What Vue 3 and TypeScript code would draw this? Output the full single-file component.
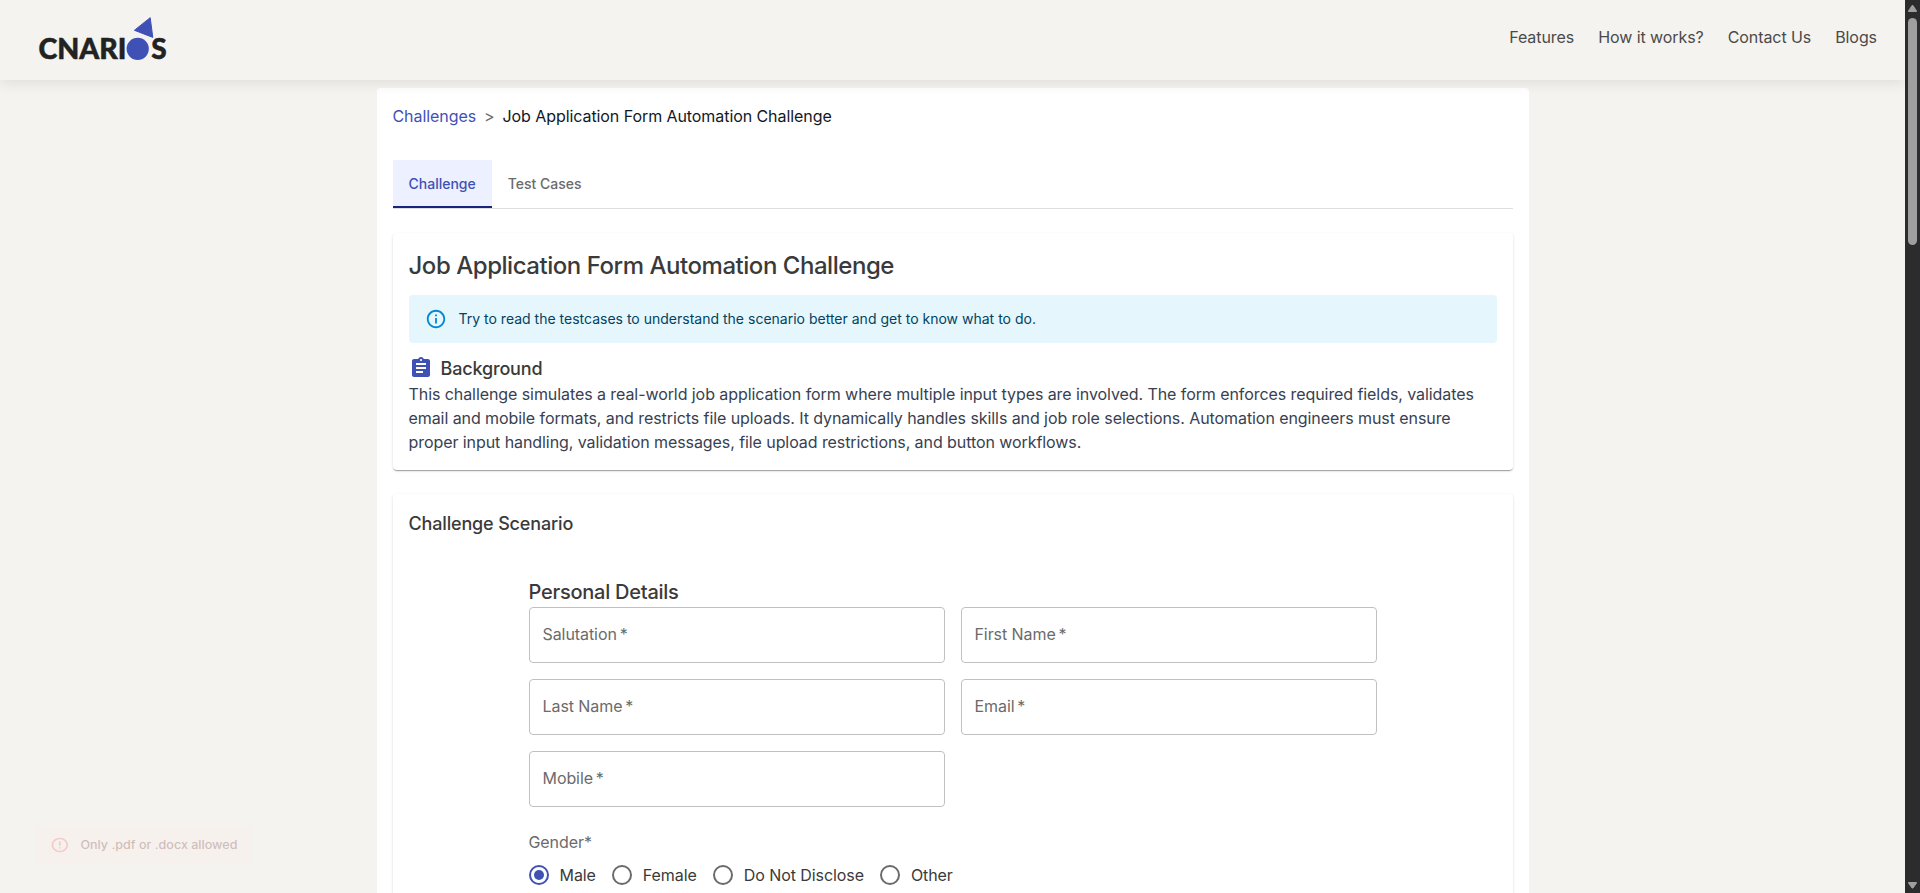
<script setup lang="ts">
import { ref } from 'vue'

interface Field { id: string; label: string }

const navLinks: string[] = ['Features', 'How it works?', 'Contact Us', 'Blogs']
const tabs: string[] = ['Challenge', 'Test Cases']
const activeTab = ref<string>('Challenge')
const fields: Field[] = [
  { id: 'salutation', label: 'Salutation' },
  { id: 'first', label: 'First Name' },
  { id: 'last', label: 'Last Name' },
  { id: 'email', label: 'Email' },
  { id: 'mobile', label: 'Mobile' },
]
const genders: string[] = ['Male', 'Female', 'Do Not Disclose', 'Other']
const gender = ref<string>('Male')
</script>

<template>
  <div class="window">
    <div class="page">
      <header class="header">
        <svg class="logo" width="140" height="56" viewBox="0 0 140 56" role="img" aria-label="CNARIOS">
          <text x="6.5" y="47.3" class="logo-text" textLength="88" lengthAdjust="spacingAndGlyphs">CNARI</text>
          <circle cx="105.7" cy="36.8" r="11.1" fill="#3f51b5" />
          <path d="M118.2 5.7 102.4 18.3 120.8 25.4Z" fill="#3f51b5" stroke="#3f51b5" stroke-linejoin="round" />
          <text x="119.3" y="47.3" class="logo-text" textLength="15.4" lengthAdjust="spacingAndGlyphs">S</text>
        </svg>
        <nav class="nav">
          <a v-for="link in navLinks" :key="link">{{ link }}</a>
        </nav>
      </header>

      <main class="container">
        <div class="crumbs">
          <a class="crumb-link">Challenges</a>
          <span class="crumb-sep">&gt;</span>
          <span>Job Application Form Automation Challenge</span>
        </div>

        <div class="tabs">
          <button v-for="tab in tabs" :key="tab" class="tab" :class="{ active: tab === activeTab }" @click="activeTab = tab">
            {{ tab }}
          </button>
        </div>

        <section class="card intro">
          <h1>Job Application Form Automation Challenge</h1>
          <div class="alert">
            <svg width="22" height="22" viewBox="0 0 24 24" fill="#0288d1">
              <path d="M11 7h2v2h-2zm0 4h2v6h-2zm1-9C6.48 2 2 6.48 2 12s4.48 10 10 10 10-4.48 10-10S17.52 2 12 2m0 18c-4.41 0-8-3.59-8-8s3.59-8 8-8 8 3.59 8 8-3.59 8-8 8" />
            </svg>
            <span>Try to read the testcases to understand the scenario better and get to know what to do.</span>
          </div>
          <div class="background-head">
            <svg width="24" height="24" viewBox="0 0 24 24" fill="#3f51b5">
              <path d="M19 3h-4.18C14.4 1.84 13.3 1 12 1s-2.4.84-2.82 2H5c-1.1 0-2 .9-2 2v14c0 1.1.9 2 2 2h14c1.1 0 2-.9 2-2V5c0-1.1-.9-2-2-2m-7 0c.55 0 1 .45 1 1s-.45 1-1 1-1-.45-1-1 .45-1 1-1m2 14H7v-2h7zm3-4H7v-2h10zm0-4H7V7h10z" />
            </svg>
            <h2>Background</h2>
          </div>
          <p>
            This challenge simulates a real-world job application form where multiple input types are involved. The form
            enforces required fields, validates email and mobile formats, and restricts file uploads. It dynamically
            handles skills and job role selections. Automation engineers must ensure proper input handling, validation
            messages, file upload restrictions, and button workflows.
          </p>
        </section>

        <section class="card scenario">
          <h2>Challenge Scenario</h2>
          <form class="form" @submit.prevent>
            <h3>Personal Details</h3>
            <div class="grid">
              <div v-for="field in fields" :key="field.id" class="field">
                <span>{{ field.label }}<span class="star">&#8201;*</span></span>
              </div>
            </div>
            <div class="gender-label">Gender*</div>
            <div class="radios">
              <label v-for="option in genders" :key="option" class="radio" @click="gender = option">
                <span class="dot" :class="{ checked: option === gender }"></span>
                {{ option }}
              </label>
            </div>
          </form>
        </section>
      </main>

      <div class="toast">
        <svg width="22" height="22" viewBox="0 0 24 24" fill="#ef5350">
          <path d="M11 15h2v2h-2zm0-8h2v6h-2zm.99-5C6.47 2 2 6.48 2 12s4.47 10 9.99 10C17.52 22 22 17.52 22 12S17.52 2 11.99 2M12 20c-4.42 0-8-3.58-8-8s3.58-8 8-8 8 3.58 8 8-3.58 8-8 8" />
        </svg>
        <span>Only .pdf or .docx allowed</span>
      </div>
    </div>

    <div class="scrollbar">
      <svg width="15" height="18" viewBox="0 0 15 18"><path d="M7 5.5h1L11.5 11v.5h-8V11Z" fill="#9f9f9f" stroke="#9f9f9f" stroke-linejoin="round" /></svg>
      <div class="thumb"></div>
      <svg class="down" width="15" height="18" viewBox="0 0 15 18"><path d="M3.5 7.5h8V8L8 13H7L3.5 8Z" fill="#9f9f9f" stroke="#9f9f9f" stroke-linejoin="round" /></svg>
    </div>
  </div>
</template>

<style>
body {
  margin: 0;
  overflow: hidden;
}
</style>

<style scoped>
* {
  box-sizing: border-box;
}
.window {
  display: flex;
  width: 1920px;
  height: 893px;
  overflow: hidden;
  font-family: Inter, sans-serif;
  font-size: 16px;
  line-height: 24px;
  letter-spacing: -0.075px;
  color: #3a3a3a;
}
.page {
  position: relative;
  flex: 1;
  background: #f5f3ef;
  overflow: hidden;
}
.header {
  position: relative;
  z-index: 1;
  height: 80px;
  padding: 12px 28px 0 32px;
  display: flex;
  justify-content: space-between;
  background: #f5f3ef;
  box-shadow: 0 4px 12px rgba(0, 0, 0, 0.08);
}
.logo-text {
  font-family: Lato, sans-serif;
  font-weight: 900;
  font-size: 27.5px;
  letter-spacing: 0;
  fill: #222;
  stroke: #222;
  stroke-width: 0.5px;
}
.nav {
  display: flex;
  gap: 24px;
  padding-top: 13px;
  color: #4a4a4a;
}
.container {
  width: 1152px;
  height: 1400px;
  margin: 8px auto 0;
  padding: 16px;
  background: #fff;
  border-radius: 4px;
}
.crumbs {
  display: flex;
  color: #111827;
}
.crumb-link {
  color: #3f51b5;
}
.crumb-sep {
  margin: 0 8px;
  color: #6b6b6b;
}
.tabs {
  display: flex;
  height: 49px;
  margin-top: 32px;
  border-bottom: 1px solid #dedede;
}
.tab {
  height: 48px;
  padding: 2px 16px 0;
  border: 0;
  border-bottom: 2px solid transparent;
  background: none;
  font: 500 14px/44px Inter, sans-serif;
  letter-spacing: 0;
  color: #6b6b6b;
}
.tab.active {
  color: #3f51b5;
  background: #edf0fe;
  border-bottom-color: #1a237e;
}
.card {
  margin-top: 24px;
  padding: 16px;
  border-radius: 4px;
  background: #fff;
  box-shadow: 0 2px 1px -1px rgba(0, 0, 0, 0.2), 0 1px 1px 0 rgba(0, 0, 0, 0.14), 0 1px 3px 0 rgba(0, 0, 0, 0.12);
}
h1,
h2,
h3,
p {
  margin: 0;
  font-weight: 470;
}
h1 {
  padding-top: 1px;
  font-size: 24px;
  line-height: 32px;
  letter-spacing: -0.46px;
}
h2 {
  font-size: 18px;
  line-height: 28px;
  letter-spacing: -0.16px;
}
.intro {
  height: 237px;
}
.alert {
  display: flex;
  align-items: center;
  gap: 12px;
  height: 48px;
  margin-top: 13px;
  padding: 0 16px;
  border-radius: 4px;
  background: #e5f6fd;
  color: #014361;
  font-size: 14px;
  letter-spacing: 0.005px;
}
.background-head {
  display: flex;
  align-items: center;
  gap: 8px;
  height: 24px;
  margin-top: 13px;
}
.background-head h2 {
  padding-top: 2px;
}
p {
  margin-top: 2px;
  font-weight: 400;
  color: #374151;
}
.scenario {
  height: 900px;
}
.form {
  width: 848px;
  margin: 38px auto 0;
}
h3 {
  height: 31px;
  font-size: 20px;
  line-height: 32px;
  letter-spacing: -0.25px;
}
.grid {
  display: grid;
  grid-template-columns: 1fr 1fr;
  gap: 16px;
}
.field {
  height: 56px;
  padding: 14px 13px;
  border: 1px solid #c0c0c0;
  border-radius: 4px;
  color: #6b6b6b;
}
.gender-label {
  margin-top: 23px;
  color: #6b6b6b;
}
.radios {
  display: flex;
  gap: 16px;
  margin-top: 9px;
}
.radio {
  display: flex;
  align-items: center;
  gap: 11px;
}
.dot {
  width: 20px;
  height: 20px;
  border: 2px solid #6b6b6b;
  border-radius: 50%;
}
.dot.checked {
  padding: 3px;
  border-color: #3f51b5;
  background: #3f51b5 content-box;
}
.toast {
  position: absolute;
  left: 23px;
  bottom: 24px;
  display: flex;
  align-items: center;
  gap: 12px;
  height: 48px;
  padding: 0 16px;
  border-radius: 4px;
  background: #fdeded;
  color: #5f2120;
  font-size: 14px;
  font-weight: 500;
  letter-spacing: 0.02px;
  opacity: 0.25;
  transform: scale(0.895, 0.79);
}
.scrollbar {
  display: flex;
  flex-direction: column;
  width: 15px;
  background: #2c2c2c;
}
.thumb {
  width: 9px;
  height: 227px;
  margin-left: 3px;
  border-radius: 5px;
  background: #9f9f9f;
}
.down {
  margin-top: auto;
}
</style>
